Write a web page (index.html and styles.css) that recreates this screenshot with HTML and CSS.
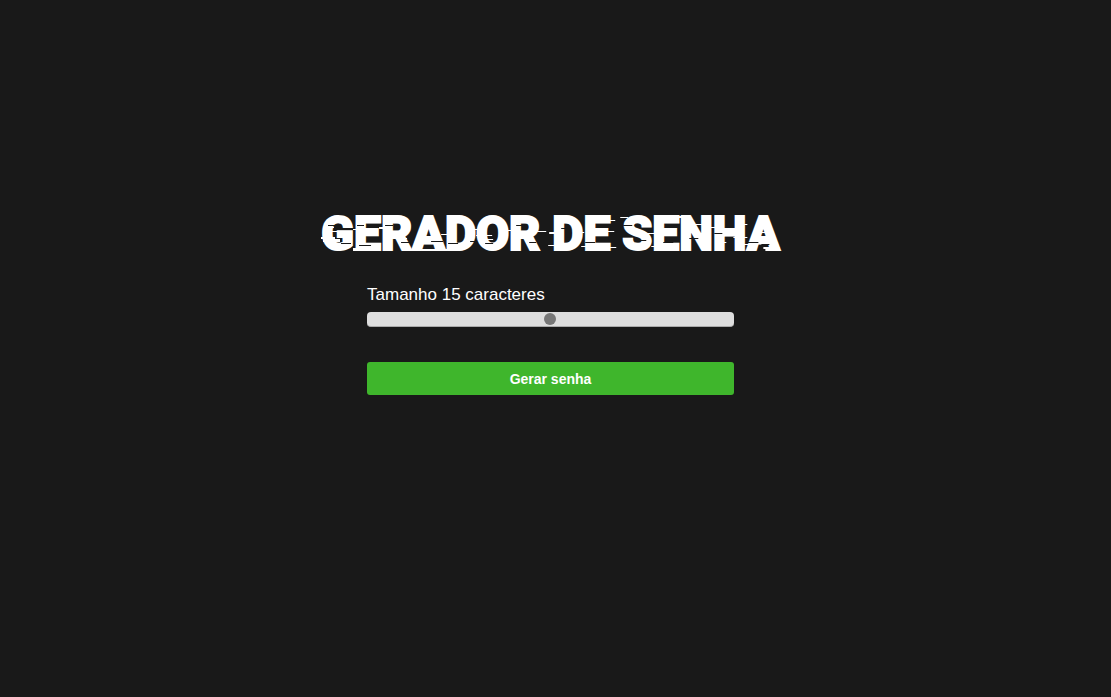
FILE: index.html
```html
<!DOCTYPE html>
<html lang="pt-BR">
<head>
<meta charset="utf-8">
<meta name="viewport" content="width=device-width, initial-scale=1">
<title>Gerador de senha</title>
<link rel="stylesheet" href="styles.css">
</head>
<body>
<main class="page">
  <header class="brand">
    <h1 class="title">GERADOR DE SENHA</h1>
    <svg class="glitch" viewBox="0 0 458 40" preserveAspectRatio="none" aria-hidden="true">
      <path class="streak" d="M0 24h14v2h5v3H2v-3H0zM4 14h9v1H4zM8 18h12v1H8zM32 16h10v1H32zM32 35h13v3H32zM58 14h8v2H58zM72 25h14v1H72zM96 23h10v2H96zM100 36h26v2h-26zM120 21h10v1h-10zM148 16h10v1h-10zM155 22h16v1h-16zM158 26h14v1h-14zM183 17h12v1h-12zM194 23h10v1h-10zM216 18h9v1h-9zM228 19h12v2h-12zM227 32h10v1h-10zM253 19h10v1h-10zM260 33h12v1h-12zM280 7h14v1h-14zM285 18h8v1h-8zM284 34h11v1h-11zM299 4h8v1h-8zM306 30h12v2h-12zM326 20h12v1h-12zM330 33h10v1h-10zM352 3h10v2h-10zM372 11h13v1h-13zM389 14h12v1h-12zM395 29h10v1h-10zM414 11h12v1h-12zM412 24h14v1h-14zM418 31h10v1h-10zM440 19h9v1h-9zM442 34h16v4h-14v-2h-2z"/>
      <path class="cut" d="M7 12h7v1H7zM20 30h10v1H20zM36 12h7v1h-7zM38 32h12v1H38zM64 12h8v1h-8zM80 29h9v1h-9zM110 28h12v1h-12zM127 30h10v1h-10zM149 28h7v1h-7zM164 30h8v1h-8zM195 12h8v1h-8zM208 29h7v1h-7zM240 15h7v1h-7zM264 29h10v1h-10zM302 12h9v1h-9zM318 27h7v1h-7zM342 29h10v1h-10zM368 25h9v1h-9zM393 20h8v1h-8zM425 29h12v1h-12zM440 31h8v1h-8z"/>
    </svg>
  </header>
  <form class="generator">
    <label class="label" for="size">Tamanho 15 caracteres</label>
    <input class="slider" id="size" type="range" min="5" max="25" value="15">
    <button class="button" type="button">Gerar senha</button>
  </form>
</main>
</body>
</html>
```
FILE: styles.css
```css
* { box-sizing: border-box; }
body { margin: 0; background: #191919; color: #fff; font-family: "Liberation Sans", Arial, sans-serif; }
.page { min-height: 100vh; padding: 204px 10px 24px 0; display: flex; flex-direction: column; align-items: center; }
.brand { position: relative; display: grid; }
.title { margin: 0; font-family: Roboto, sans-serif; font-weight: 900; font-size: 48px; line-height: 60px; white-space: nowrap; -webkit-text-stroke: 2px #fff; }
.glitch { position: absolute; left: 0; top: 9px; width: 100%; height: 40px; }
.streak { fill: #fff; }
.cut { fill: #191919; }
.generator { width: 33.33%; margin-top: 21px; display: flex; flex-direction: column; }
.label { font-size: 17px; line-height: 20px; }
.slider { appearance: none; -webkit-appearance: none; width: 100%; height: 15px; margin: 7px 0 0; padding: 0 1px; border-radius: 4px; background: #dedede; border-bottom: 1px solid #aaa; }
.slider::-webkit-slider-thumb { appearance: none; -webkit-appearance: none; width: 12px; height: 12px; border-radius: 50%; background: #777; }
.button { margin-top: 35px; height: 33px; border: 0; border-radius: 3px; background: #3fb62c; color: #fff; font: bold 14px/20px "Liberation Sans", Arial, sans-serif; }
```
